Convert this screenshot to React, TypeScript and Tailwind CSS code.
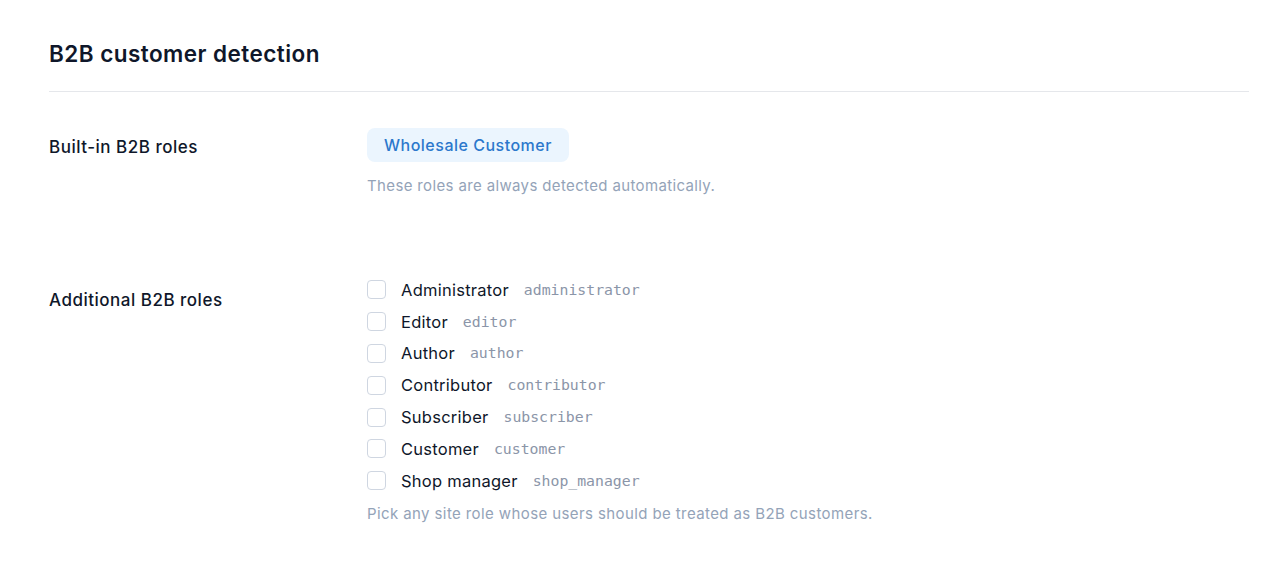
import React from "react";

const roles = [
  { name: "Administrator", slug: "administrator" },
  { name: "Editor", slug: "editor" },
  { name: "Author", slug: "author" },
  { name: "Contributor", slug: "contributor" },
  { name: "Subscriber", slug: "subscriber" },
  { name: "Customer", slug: "customer" },
  { name: "Shop manager", slug: "shop_manager" },
];

export default function App() {
  return (
    <div
      className="min-h-[581px] bg-white pl-[49px] pr-[20px] pt-[39px] text-[#0f172a]"
      style={{ fontFamily: "Inter, 'Noto Sans', sans-serif" }}
    >
      <h1 className="border-b border-[#e5e7eb] pb-[22px] text-[22.5px] font-semibold leading-[30px] tracking-[0.45px] text-[#0f172a]">
        B2B customer detection
      </h1>

      <div className="mt-[36px] flex">
        <div className="w-[318px] shrink-0 pt-[7px] text-[17px] font-medium leading-[24px] tracking-[0.5px] text-[#0f172a]">
          Built-in B2B roles
        </div>
        <div className="flex flex-col items-start">
          <span className="rounded-[8px] bg-[#ebf5fe] px-[17px] py-[6.5px] text-[16px] font-medium leading-[21px] tracking-[0.5px] text-[#2b78cc]">
            Wholesale Customer
          </span>
          <p className="mt-[14px] text-[15px] leading-[20px] tracking-[0.36px] text-[#94a3b8]">
            These roles are always detected automatically.
          </p>
        </div>
      </div>

      <div className="mt-[78px] flex">
        <div className="w-[318px] shrink-0 pt-[14px] text-[17px] font-medium leading-[24px] tracking-[0.5px] text-[#0f172a]">
          Additional B2B roles
        </div>
        <div className="flex flex-col items-start">
          {roles.map((r) => (
            <label key={r.slug} className="flex h-[31.8px] items-center">
              <span className="h-[19px] w-[19px] rounded-[4px] border border-[#cfd6e1] bg-white" />
              <span className="ml-[15px] text-[16.5px] leading-[22px] tracking-[0.25px] text-[#0f172a]">{r.name}</span>
              <span
                className="ml-[15px] text-[14.8px] leading-[20px] text-[#8b95a8]"
                style={{ fontFamily: "'DejaVu Sans Mono', 'Liberation Mono', monospace" }}
              >
                {r.slug}
              </span>
            </label>
          ))}
          <p className="mt-[7px] text-[15px] leading-[20px] tracking-[0.4px] text-[#94a3b8]">
            Pick any site role whose users should be treated as B2B customers.
          </p>
        </div>
      </div>
    </div>
  );
}
